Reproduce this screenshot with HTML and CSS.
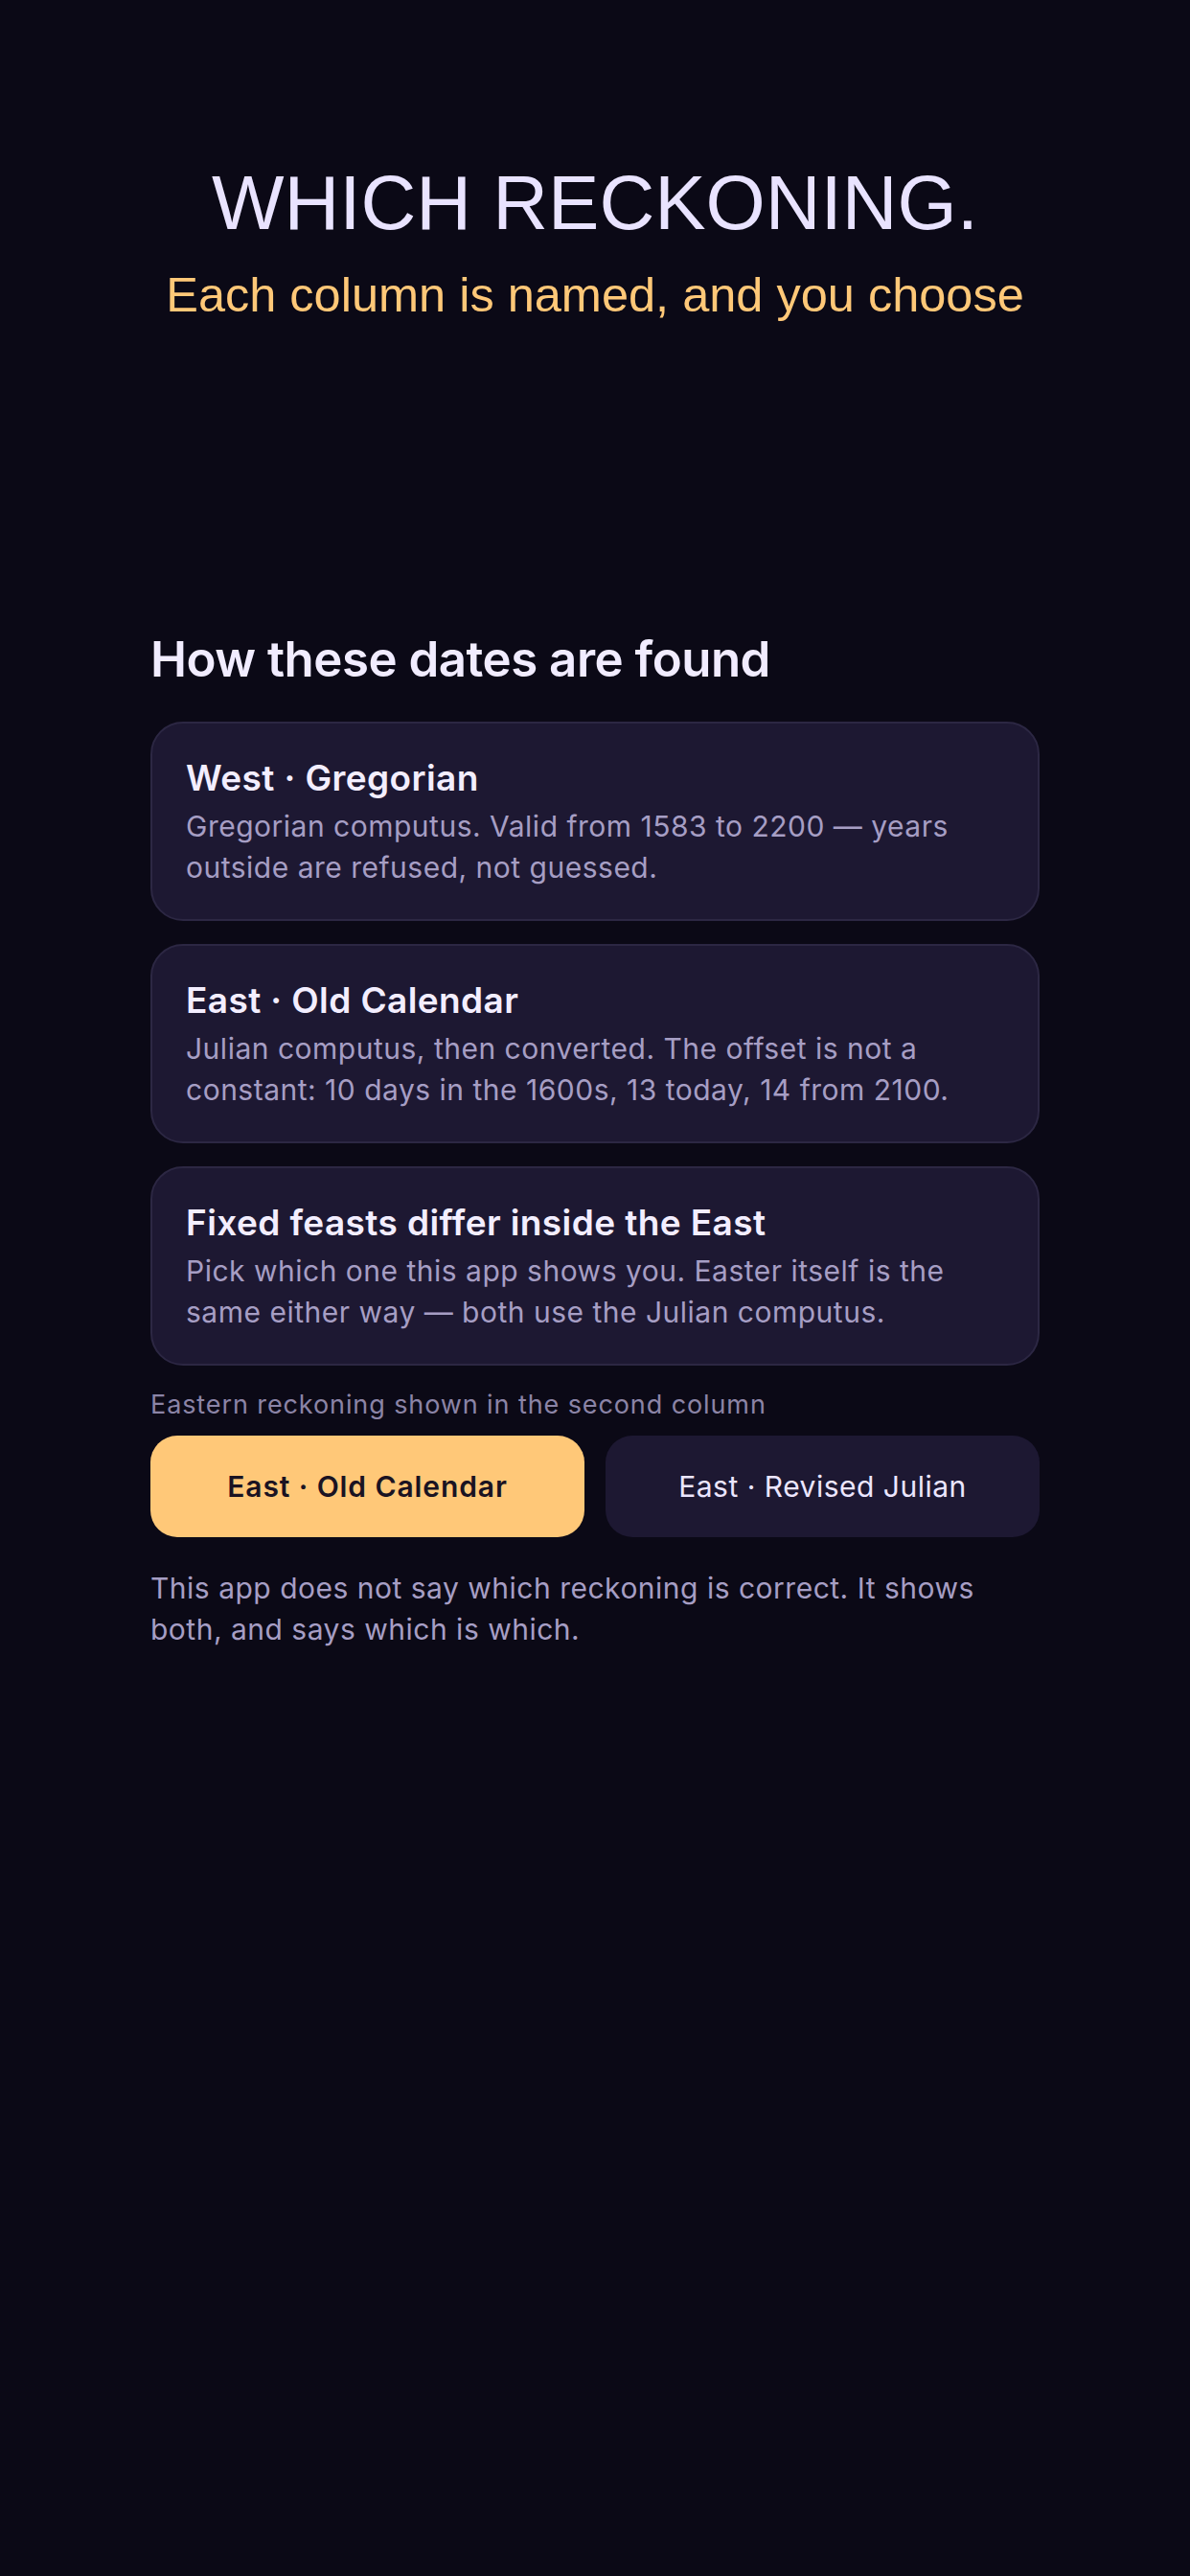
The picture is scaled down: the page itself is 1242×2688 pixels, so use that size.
FILE: index.html
```html
<!DOCTYPE html>
<html lang="en">
<head>
<meta charset="utf-8">
<title>Which Reckoning</title>
<link rel="stylesheet" href="styles.css">
</head>
<body>
<main class="page">
  <header class="hero">
    <h1 class="hero-title">WHICH RECKONING.</h1>
    <p class="hero-sub">Each column is named, and you choose</p>
  </header>

  <section class="info">
    <h2 class="info-heading">How these dates are found</h2>
    <div class="cards">
      <article class="card">
        <h3 class="card-title">West · Gregorian</h3>
        <p class="card-text">Gregorian computus. Valid from 1583 to 2200 — years outside are refused, not guessed.</p>
      </article>
      <article class="card">
        <h3 class="card-title">East · Old Calendar</h3>
        <p class="card-text">Julian computus, then converted. The offset is not a constant: 10 days in the 1600s, 13 today, 14 from 2100.</p>
      </article>
      <article class="card">
        <h3 class="card-title">Fixed feasts differ inside the East</h3>
        <p class="card-text">Pick which one this app shows you. Easter itself is the same either way — both use the Julian computus.</p>
      </article>
    </div>

    <p class="choice-label">Eastern reckoning shown in the second column</p>
    <div class="choice">
      <button class="choice-btn is-active" type="button">East · Old Calendar</button>
      <button class="choice-btn" type="button">East · Revised Julian</button>
    </div>

    <p class="note">This app does not say which reckoning is correct. It shows both, and says which is which.</p>
  </section>
</main>
</body>
</html>
```

FILE: styles.css
```css
* {
  box-sizing: border-box;
}

html, body {
  margin: 0;
  padding: 0;
  background: #0b0916;
}

body {
  min-height: 2688px;
  font-family: Inter, "Noto Sans", sans-serif;
  color: #ece6ff;
}

.page {
  display: flex;
  flex-direction: column;
}

.hero {
  padding-top: 166px;
  text-align: center;
  font-family: "Liberation Sans", Arial, sans-serif;
}

.hero-title {
  margin: 0;
  font-size: 80px;
  line-height: 92px;
  font-weight: 400;
  color: #e9e3ff;
}

.hero-sub {
  margin: 22px 0 0;
  font-size: 50.5px;
  line-height: 55px;
  color: #ffc878;
}

.info {
  padding: 323px 157px 0;
  display: flex;
  flex-direction: column;
}

.info-heading {
  margin: 0;
  font-size: 51px;
  line-height: 60px;
  font-weight: 600;
  letter-spacing: -0.5px;
  color: #f1ecff;
}

.cards {
  margin-top: 35px;
  display: flex;
  flex-direction: column;
  gap: 24px;
}

.card {
  background: #1d1832;
  border: 2px solid #2c2743;
  border-radius: 34px;
  padding: 35px 35px 32px;
}

.card-title {
  margin: 0;
  font-size: 37px;
  line-height: 43px;
  font-weight: 600;
  letter-spacing: 0.4px;
  color: #f3eeff;
}

.card-text {
  margin: 8px 0 0;
  font-size: 30px;
  line-height: 43px;
  letter-spacing: 0.5px;
  color: #a69ec4;
}

.choice-label {
  margin: 23px 0 0;
  font-size: 27px;
  line-height: 35px;
  letter-spacing: 0.9px;
  color: #8b84a6;
}

.choice {
  margin-top: 15px;
  display: grid;
  grid-template-columns: 1fr 1fr;
  gap: 22px;
}

.choice-btn {
  height: 106px;
  border: none;
  border-radius: 28px;
  background: #1d1832;
  color: #ece6ff;
  font-family: Inter, "Noto Sans", sans-serif;
  font-size: 30px;
  font-weight: 400;
  letter-spacing: 0.5px;
  padding: 0 16px;
}

.choice-btn.is-active {
  background: #ffc878;
  color: #1a1322;
  font-weight: 600;
  letter-spacing: 0.9px;
}

.note {
  margin: 32px 0 0;
  font-size: 30px;
  line-height: 43px;
  letter-spacing: 0.5px;
  color: #a69ec4;
}
```
